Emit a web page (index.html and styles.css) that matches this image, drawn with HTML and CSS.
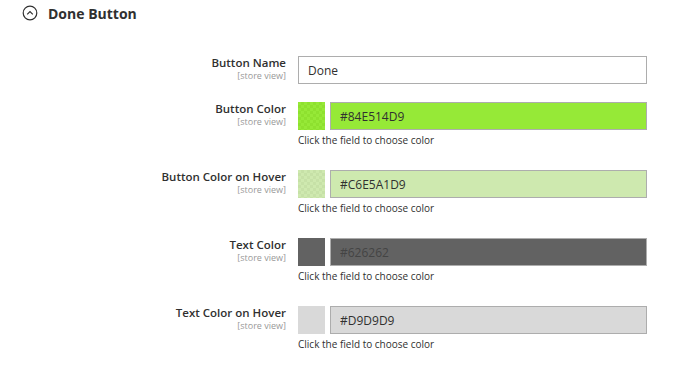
FILE: index.html
```html
<!DOCTYPE html>
<html lang="en">
<head>
    <meta charset="UTF-8">
    <title>Done Button</title>
    <link rel="stylesheet" href="styles.css">
</head>
<body>
    <div class="section-title">
        <svg class="toggle-icon" width="16" height="16" viewBox="0 0 16 16">
            <circle cx="8" cy="8" r="6.8" fill="none" stroke="#303030" stroke-width="1.2"/>
            <path d="M5.2 9.4 L8 6.6 L10.8 9.4" fill="none" stroke="#303030" stroke-width="1.2"/>
        </svg>
        <span>Done Button</span>
    </div>

    <div class="fields">
        <div class="field">
            <div class="label">
                <span class="label-text">Button Name</span>
                <span class="scope">[store view]</span>
            </div>
            <div class="control">
                <input class="text-input" type="text" value="Done">
            </div>
        </div>

        <div class="field">
            <div class="label">
                <span class="label-text">Button Color</span>
                <span class="scope">[store view]</span>
            </div>
            <div class="control">
                <div class="color-line">
                    <span class="swatch swatch-green"></span>
                    <input class="text-input color-input input-green" type="text" value="#84E514D9">
                </div>
                <div class="note">Click the field to choose color</div>
            </div>
        </div>

        <div class="field">
            <div class="label">
                <span class="label-text">Button Color on Hover</span>
                <span class="scope">[store view]</span>
            </div>
            <div class="control">
                <div class="color-line">
                    <span class="swatch swatch-lightgreen"></span>
                    <input class="text-input color-input input-lightgreen" type="text" value="#C6E5A1D9">
                </div>
                <div class="note">Click the field to choose color</div>
            </div>
        </div>

        <div class="field">
            <div class="label">
                <span class="label-text">Text Color</span>
                <span class="scope">[store view]</span>
            </div>
            <div class="control">
                <div class="color-line">
                    <span class="swatch swatch-dark"></span>
                    <input class="text-input color-input input-dark" type="text" value="#626262">
                </div>
                <div class="note">Click the field to choose color</div>
            </div>
        </div>

        <div class="field">
            <div class="label">
                <span class="label-text">Text Color on Hover</span>
                <span class="scope">[store view]</span>
            </div>
            <div class="control">
                <div class="color-line">
                    <span class="swatch swatch-grey"></span>
                    <input class="text-input color-input input-grey" type="text" value="#D9D9D9">
                </div>
                <div class="note">Click the field to choose color</div>
            </div>
        </div>
    </div>
</body>
</html>
```

FILE: styles.css
```css
/* Base */
body {
    margin: 0;
    background: #fff;
    font-family: "Open Sans", "Liberation Sans", sans-serif;
    color: #303030;
}

/* Section header */
.section-title {
    display: flex;
    align-items: center;
    gap: 10px;
    padding: 4px 0 0 22px;
    height: 18px;
    font-size: 14px;
    font-weight: 700;
    color: #303030;
}

/* Field rows */
.fields {
    padding-top: 34px;
}

.field {
    display: grid;
    grid-template-columns: 286px 349px;
    column-gap: 12px;
    margin-bottom: 18px;
}

.field + .field {
    margin-bottom: 23px;
}

.label {
    display: flex;
    flex-direction: column;
    align-items: flex-end;
    padding-top: 0;
}

.label-text {
    font-size: 11.5px;
    font-weight: 600;
    line-height: 14px;
}

.scope {
    font-size: 9px;
    line-height: 11px;
    color: #999;
}

/* Inputs */
.text-input {
    box-sizing: border-box;
    display: block;
    width: 100%;
    height: 28px;
    margin: 0;
    padding: 0 8px 0 9px;
    border: 1px solid #adadad;
    background: #fff;
    font-family: inherit;
    font-size: 12px;
    color: #303030;
    outline: none;
}

.color-line {
    display: flex;
    gap: 5px;
}

.swatch {
    flex: 0 0 27px;
    height: 28px;
}

.color-input {
    flex: 1;
    width: auto;
}

.note {
    margin-top: 3px;
    font-size: 10px;
    line-height: 14px;
}

/* Colour values */
.swatch-green {
    background: linear-gradient(rgba(132, 229, 20, 0.85), rgba(132, 229, 20, 0.85)),
        repeating-conic-gradient(#c8c8c8 0 25%, #fff 0 50%) 0 0 / 6px 6px;
}

.swatch-lightgreen {
    background: linear-gradient(rgba(198, 229, 161, 0.85), rgba(198, 229, 161, 0.85)),
        repeating-conic-gradient(#c8c8c8 0 25%, #fff 0 50%) 0 0 / 6px 6px;
}

.swatch-dark {
    background: #626262;
}

.swatch-grey {
    background: #d9d9d9;
}

.input-green {
    background: rgba(132, 229, 20, 0.85);
}

.input-lightgreen {
    background: rgba(198, 229, 161, 0.85);
}

.input-dark {
    background: #626262;
    color: #444;
}

.input-grey {
    background: #d9d9d9;
}
```
